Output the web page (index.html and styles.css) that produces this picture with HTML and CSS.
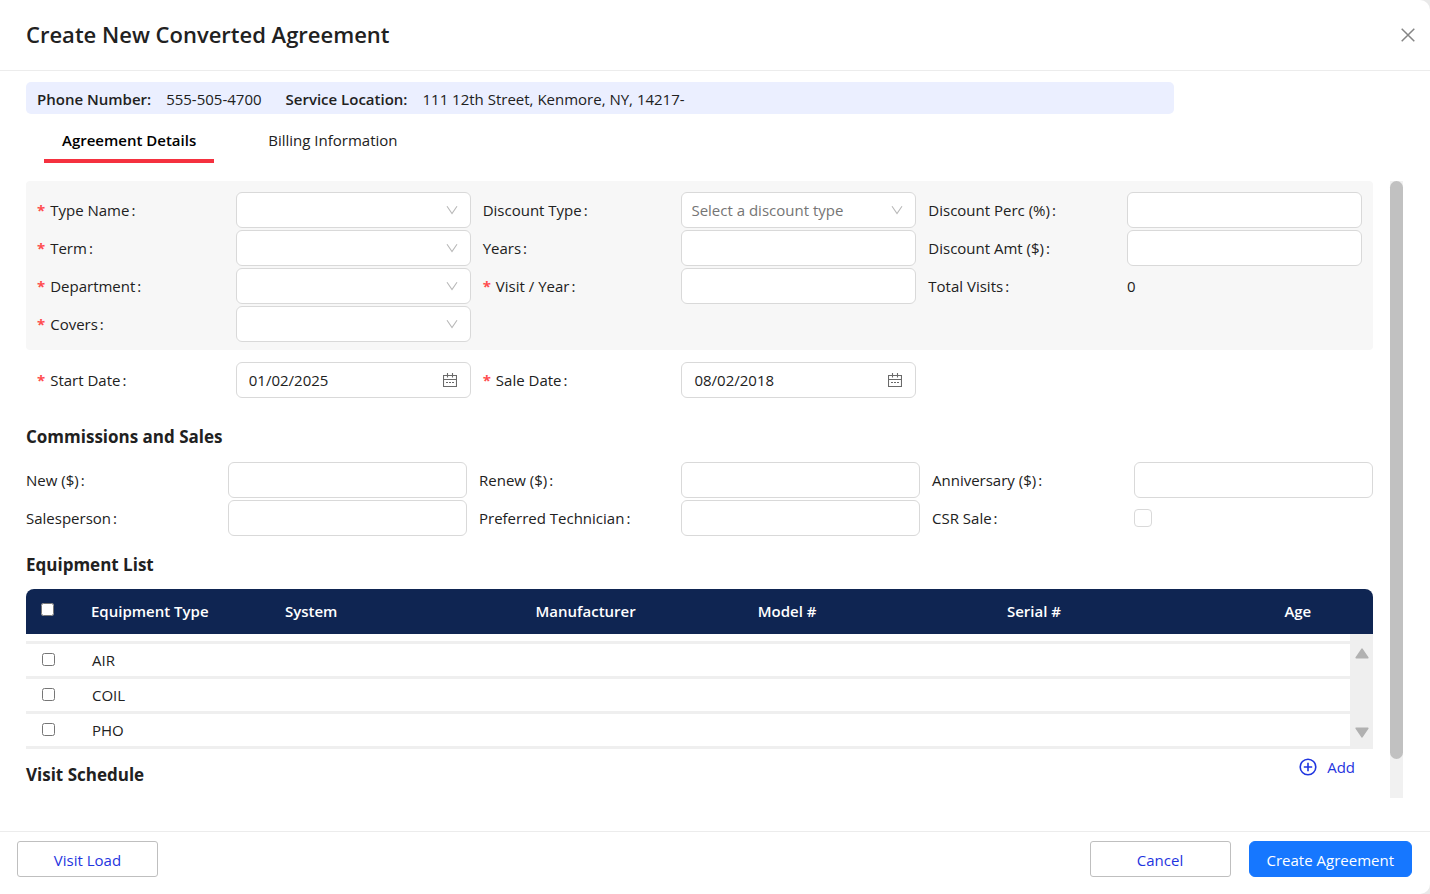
FILE: index.html
```html
<!DOCTYPE html>
<html lang="en">
<head>
<meta charset="utf-8">
<title>Create New Converted Agreement</title>
<link rel="stylesheet" href="styles.css">
</head>
<body>
<svg class="sprite" aria-hidden="true">
  <symbol id="chevron" viewBox="0 0 12 12"><path d="M1 2.2 6 9.6 11 2.2" fill="none" stroke="currentColor" stroke-width="1.1"/></symbol>
  <symbol id="calendar" viewBox="0 0 14 14"><path d="M.5 2.5h13v11H.5zM.5 6.5h13M4.5 0v4.6M9.5 0v4.6" fill="none" stroke="currentColor" stroke-width="1.1"/><path d="M3 9.5h2M6 9.5h2M9 9.5h2" stroke="currentColor" stroke-width="1"/></symbol>
</svg>
<main class="modal">
  <header class="modal-header">
    <h1 class="modal-title">Create New Converted Agreement</h1>
    <button class="close" type="button" aria-label="Close"><svg width="14" height="14" viewBox="0 0 14 14"><path d="M.7.7l12.6 12.6M13.3.7.7 13.3" stroke="currentColor" stroke-width="1.5"/></svg></button>
  </header>

  <section class="modal-body">
    <div class="summary">
      <strong class="summary-key">Phone Number:</strong><span class="summary-value">555-505-4700</span>
      <strong class="summary-key">Service Location:</strong><span>111 12th Street, Kenmore, NY, 14217-</span>
    </div>
    <nav class="tabs">
      <button class="tab tab-active" type="button">Agreement Details</button>
      <button class="tab" type="button">Billing Information</button>
    </nav>

    <div class="scroll-area">
      <div class="content">
        <div class="panel form-grid">
          <div class="field"><label class="required" for="type">Type Name</label><div class="control"><select id="type" class="input"><option></option></select><svg class="chevron"><use href="#chevron"/></svg></div></div>
          <div class="field"><label for="dtype">Discount Type</label><div class="control"><select id="dtype" class="input placeholder"><option>Select a discount type</option></select><svg class="chevron"><use href="#chevron"/></svg></div></div>
          <div class="field"><label for="perc">Discount Perc (%)</label><input id="perc" class="input" type="text"></div>

          <div class="field"><label class="required" for="term">Term</label><div class="control"><select id="term" class="input"><option></option></select><svg class="chevron"><use href="#chevron"/></svg></div></div>
          <div class="field"><label for="years">Years</label><input id="years" class="input" type="text"></div>
          <div class="field"><label for="amt">Discount Amt ($)</label><input id="amt" class="input" type="text"></div>

          <div class="field"><label class="required" for="dept">Department</label><div class="control"><select id="dept" class="input"><option></option></select><svg class="chevron"><use href="#chevron"/></svg></div></div>
          <div class="field"><label class="required" for="visits">Visit / Year</label><input id="visits" class="input" type="text"></div>
          <div class="field"><label for="total">Total Visits</label><output id="total">0</output></div>

          <div class="field"><label class="required" for="covers">Covers</label><div class="control"><select id="covers" class="input"><option></option></select><svg class="chevron"><use href="#chevron"/></svg></div></div>
        </div>

        <div class="dates form-grid">
          <div class="field"><label class="required" for="start">Start Date</label><div class="control"><input id="start" class="input" type="text" value="01/02/2025"><svg class="calendar"><use href="#calendar"/></svg></div></div>
          <div class="field"><label class="required" for="sale">Sale Date</label><div class="control"><input id="sale" class="input" type="text" value="08/02/2018"><svg class="calendar"><use href="#calendar"/></svg></div></div>
        </div>

        <h2 class="section-title title-sales">Commissions and Sales</h2>
        <div class="form-grid">
          <div class="field"><label for="new">New ($)</label><input id="new" class="input" type="text"></div>
          <div class="field"><label for="renew">Renew ($)</label><input id="renew" class="input" type="text"></div>
          <div class="field"><label for="anniv">Anniversary ($)</label><input id="anniv" class="input" type="text"></div>
          <div class="field"><label for="person">Salesperson</label><input id="person" class="input" type="text"></div>
          <div class="field"><label for="tech">Preferred Technician</label><input id="tech" class="input" type="text"></div>
          <div class="field"><label for="csr">CSR Sale</label><input id="csr" class="checkbox" type="checkbox"></div>
        </div>

        <h2 class="section-title title-equipment">Equipment List</h2>
        <table class="equipment">
          <colgroup><col class="col-check"><col class="col-type"><col class="col-system"><col class="col-maker"><col class="col-model"><col class="col-serial"><col><col class="col-scroll"></colgroup>
          <thead>
            <tr><th><input type="checkbox" aria-label="Select all"></th><th>Equipment Type</th><th>System</th><th>Manufacturer</th><th>Model #</th><th>Serial #</th><th>Age</th><th></th></tr>
          </thead>
          <tbody>
            <tr class="spacer"><td colspan="7"></td><td class="scroll-cell" rowspan="4"><div class="arrows"><svg width="14" height="11" viewBox="0 0 14 11"><path d="M7 1.2 12.8 9.8H1.2z" fill="#b1b1b1" stroke="#b1b1b1" stroke-width="1.6" stroke-linejoin="round"/></svg><svg width="14" height="11" viewBox="0 0 14 11"><path d="M7 9.8 1.2 1.2h11.6z" fill="#b1b1b1" stroke="#b1b1b1" stroke-width="1.6" stroke-linejoin="round"/></svg></div></td></tr>
            <tr><td><input type="checkbox" aria-label="Select AIR"></td><td>AIR</td><td></td><td></td><td></td><td></td><td></td></tr>
            <tr><td><input type="checkbox" aria-label="Select COIL"></td><td>COIL</td><td></td><td></td><td></td><td></td><td></td></tr>
            <tr><td><input type="checkbox" aria-label="Select PHO"></td><td>PHO</td><td></td><td></td><td></td><td></td><td></td></tr>
          </tbody>
        </table>

        <div class="schedule">
          <h2 class="section-title">Visit Schedule</h2>
          <button class="add" type="button"><svg width="18" height="18" viewBox="0 0 18 18"><circle cx="9" cy="9" r="7.8" fill="none" stroke="currentColor" stroke-width="1.6"/><path d="M9 4.8v8.4M4.8 9h8.4" stroke="currentColor" stroke-width="1.6"/></svg>Add</button>
        </div>
      </div>
      <div class="scrollbar"><div class="thumb"></div></div>
    </div>
  </section>

  <footer class="modal-footer">
    <button class="button" type="button">Visit Load</button>
    <button class="button push" type="button">Cancel</button>
    <button class="button primary" type="button">Create Agreement</button>
  </footer>
</main>
</body>
</html>
```

FILE: styles.css
```css
* { box-sizing: border-box; }

body {
  margin: 0;
  background: #e9e9e9;
  color: #212121;
  font: 15px/22px "Open Sans", "Noto Sans", sans-serif;
}

button, input, select { font: inherit; color: inherit; }
button { cursor: pointer; }
.sprite { display: none; }

.modal {
  display: flex;
  flex-direction: column;
  min-height: 100vh;
  background: #fff;
  border-radius: 0 10px 10px 0;
}

.modal-header {
  display: flex;
  align-items: center;
  justify-content: space-between;
  padding: 18px 15px 18px 26px;
  border-bottom: 1px solid #ececec;
}
.modal-title { margin: 0; padding-bottom: 2px; font-size: 22px; line-height: 32px; font-weight: 600; }
.close { display: flex; padding: 0; border: 0; background: none; color: #858585; }

.modal-body {
  flex: 1;
  display: flex;
  flex-direction: column;
  padding: 11px 27px 33px 26px;
}

.summary {
  display: flex;
  align-items: center;
  width: 83.4%;
  padding: 6px 11px 4px;
  background: #ebefff;
  border-radius: 5px;
}
.summary-key { margin-right: 15px; font-weight: 600; }
.summary-value { margin-right: 24px; }

.tabs { display: flex; gap: 36px; padding-left: 18px; margin-bottom: 18px; }
.tab {
  padding: 15px 18px 8px;
  border: 0;
  border-bottom: 4px solid transparent;
  background: none;
}
.tab-active { border-color: #f5313f; color: #000; font-weight: 600; }

.scroll-area { flex: 1; display: flex; gap: 17px; }
.content { flex: 1; }
.scrollbar { width: 13px; background: #f1f1f1; }
.thumb { height: 93.7%; background: #c1c1c1; border-radius: 7px; }

.form-grid {
  display: grid;
  grid-template-columns: repeat(3, minmax(0, 1fr));
  gap: 2px 12px;
}
.panel { padding: 11px 11px 8px; background: #f7f7f7; border-radius: 4px; }
.dates { padding: 12px 11px 0; }

.field {
  display: grid;
  grid-template-columns: minmax(0, 11fr) minmax(0, 13fr);
  align-items: center;
  min-height: 36px;
}
.field label { font-weight: 500; white-space: nowrap; }
.field label::after { content: ":"; margin-left: 2px; }
.required::before {
  content: "*";
  margin-right: 5px;
  color: #ff4d4f;
  font-weight: 700;
}

.control { position: relative; }
.input {
  display: block;
  width: 100%;
  height: 36px;
  padding: 0 12px;
  border: 1px solid #d9d9d9;
  border-radius: 6px;
  background: #fff;
  appearance: none;
}
.placeholder { padding-left: 9px; color: #757575; }
.chevron, .calendar { position: absolute; top: 0; bottom: 0; margin: auto 0; pointer-events: none; }
.chevron { right: 13px; width: 12px; height: 12px; color: #b8b8b8; }
.calendar { right: 14px; width: 14px; height: 14px; color: #6a6a6a; }

.checkbox {
  width: 18px;
  height: 18px;
  margin: 0;
  border: 1px solid #d9d9d9;
  border-radius: 4px;
  background: #fff;
  appearance: none;
}

.section-title { margin: 0; font-size: 17px; line-height: 24px; font-weight: 700; }
.title-sales { padding: 27px 0 13px; }
.title-equipment { padding: 17px 0 12px; }

.equipment { width: 100%; table-layout: fixed; border-spacing: 0; }
.col-check { width: 65px; }
.col-type { width: 14.4%; }
.col-system { width: 18.6%; }
.col-maker { width: 16.5%; }
.col-model { width: 18.5%; }
.col-serial { width: 20.6%; }
.col-scroll { width: 23px; }
.equipment th {
  height: 45px;
  padding: 0 0 2px;
  background: #0f2552;
  color: #fff;
  font-weight: 600;
  text-align: left;
}
.equipment th:first-child { border-top-left-radius: 8px; }
.equipment th:last-child { border-top-right-radius: 8px; }
.equipment td { height: 35px; padding: 0 1px; border-bottom: 3px solid #efefef; }
.equipment .spacer td { height: 10px; }
.equipment input { display: block; margin: 0 0 2px 15px; }
.equipment .scroll-cell { padding-top: 5px; background: #efefef; }
.arrows { display: flex; flex-direction: column; align-items: center; gap: 68px; }

.schedule { display: flex; justify-content: space-between; padding: 6px 18px 0 0; }
.schedule .section-title { padding-top: 8px; }
.add {
  display: flex;
  align-items: center;
  gap: 10px;
  height: 24px;
  padding: 0;
  border: 0;
  background: none;
  color: #1f35e0;
}

.modal-footer {
  display: flex;
  gap: 18px;
  padding: 9px 18px 17px 17px;
  border-top: 1px solid #ececec;
}
.button {
  min-width: 141px;
  height: 36px;
  padding: 2px 17px 0;
  border: 1px solid #bfbfbf;
  border-radius: 3px;
  background: #fff;
  color: #1f35e0;
}
.push { margin-left: auto; }
.primary { border-color: #1677ff; border-radius: 6px; background: #1677ff; color: #fff; }
```
